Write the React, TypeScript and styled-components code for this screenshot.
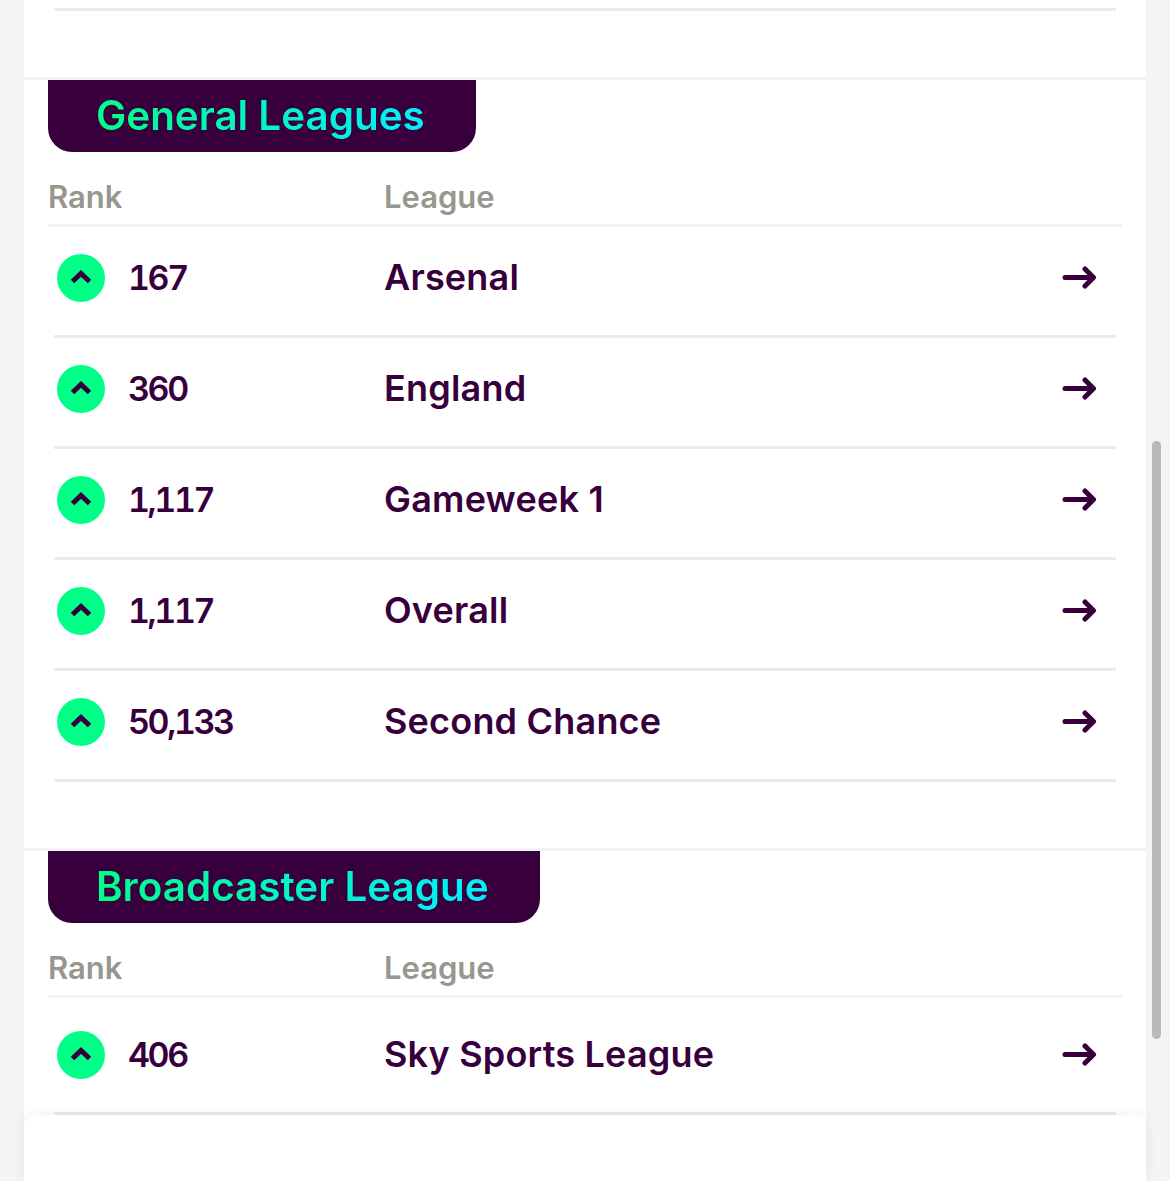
import React from 'react';
import styled, { createGlobalStyle } from 'styled-components';

const Global = createGlobalStyle`
  html, body { margin: 0; padding: 0; height: 100%; overflow: hidden; background: #f4f4f5; }
  #root { height: 100%; }
`;

const purple = '#37003c';

const Screen = styled.div`
  position: relative;
  height: 1181px;
  overflow: hidden;
  padding: 0 24px;
  font-family: Inter, "Noto Sans", sans-serif;
`;

const Sheet = styled.main`
  background: #fff;
  height: 100%;
  padding-top: 8px;
  box-sizing: border-box;
`;

const TopRule = styled.div`
  height: 3px;
  margin: 0 30px 66px;
  background: #ebebeb;
`;

const Section = styled.section<{ $last?: boolean }>`
  border-top: 3px solid #f2f2f7;
  padding: 0 24px ${({ $last }) => ($last ? 0 : 66)}px;
`;

const Tab = styled.div`
  display: inline-flex;
  align-items: center;
  height: 72px;
  padding: 0 51px 0 48px;
  background: ${purple};
  border-radius: 0 0 24px 24px;
  vertical-align: top;
`;

const TabTitle = styled.h3`
  margin: 0;
  font-size: 40.4px;
  font-weight: 600;
  line-height: 1.3;
  background: linear-gradient(98deg, #00ff87 0%, #02efff 100%);
  -webkit-background-clip: text;
  background-clip: text;
  color: transparent;
`;

const HeadRow = styled.div`
  display: grid;
  grid-template-columns: 336px 1fr;
  align-items: center;
  height: 75px;
  padding-top: 17px;
  box-sizing: border-box;
  border-bottom: 3px solid #f2f2f7;
  font-size: 31px;
  font-weight: 600;
  color: #97968f;
`;

const Row = styled.div<{ $tall?: boolean }>`
  display: grid;
  grid-template-columns: 48px 279px 1fr 34px;
  align-items: center;
  margin: 0 6px;
  padding: ${({ $tall }) => ($tall ? '33px 20px 33px 3px' : '27px 20px 33px 3px')};
  border-bottom: 3px solid #ebebeb;
  font-size: 36px;
  font-weight: 600;
  letter-spacing: 0.2px;
  color: ${purple};
`;

const UpBadge = styled.span`
  display: flex;
  align-items: center;
  justify-content: center;
  width: 48px;
  height: 48px;
  border-radius: 50%;
  background: #00ff87;
`;

const RankValue = styled.span`
  padding-left: 23px;
  line-height: 48px;
  font-size: 34px;
  font-feature-settings: "tnum";
  letter-spacing: -2.4px;
`;

const LeagueName = styled.span`
  margin-top: -2px;
  line-height: 48px;
`;

const FooterCard = styled.div`
  position: absolute;
  left: 24px;
  right: 24px;
  bottom: 0;
  height: 66px;
  background: #fff;
  border-radius: 10px 10px 0 0;
  box-shadow: 0 0 14px rgba(0, 0, 0, 0.07);
`;

const ScrollThumb = styled.div`
  position: absolute;
  left: 1152px;
  top: 441px;
  width: 9px;
  height: 598px;
  border-radius: 5px;
  background: #b9b9b9;
`;

const Chevron = () => (
  <svg width="22" height="16" viewBox="0 0 22 16" fill="none">
    <path d="M2.5 11.5 L11 3.5 L19.5 11.5" stroke={purple} strokeWidth="5" strokeLinejoin="miter" />
  </svg>
);

const Arrow = () => (
  <svg width="34" height="24" viewBox="0 0 34 24" fill="none">
    <path
      d="M3 11.5 H31 M23 3 L31.5 11.5 L23 20"
      stroke={purple}
      strokeWidth="5"
      strokeLinecap="round"
      strokeLinejoin="round"
    />
  </svg>
);

type Entry = { rank: string; name: string };

const general: Entry[] = [
  { rank: '167', name: 'Arsenal' },
  { rank: '360', name: 'England' },
  { rank: '1,117', name: 'Gameweek 1' },
  { rank: '1,117', name: 'Overall' },
  { rank: '50,133', name: 'Second Chance' },
];

const broadcaster: Entry[] = [{ rank: '406', name: 'Sky Sports League' }];

const LeagueTable: React.FC<{ title: string; rows: Entry[]; last?: boolean }> = ({ title, rows, last }) => (
  <Section $last={last}>
    <Tab>
      <TabTitle>{title}</TabTitle>
    </Tab>
    <HeadRow>
      <span>Rank</span>
      <span>League</span>
    </HeadRow>
    {rows.map((r) => (
      <Row key={r.name} $tall={last}>
        <UpBadge>
          <Chevron />
        </UpBadge>
        <RankValue>{r.rank}</RankValue>
        <LeagueName>{r.name}</LeagueName>
        <Arrow />
      </Row>
    ))}
  </Section>
);

export default function App() {
  return (
    <Screen>
      <Global />
      <Sheet>
        <TopRule />
        <LeagueTable title="General Leagues" rows={general} />
        <LeagueTable title="Broadcaster League" rows={broadcaster} last />
      </Sheet>
      <FooterCard />
      <ScrollThumb />
    </Screen>
  );
}
